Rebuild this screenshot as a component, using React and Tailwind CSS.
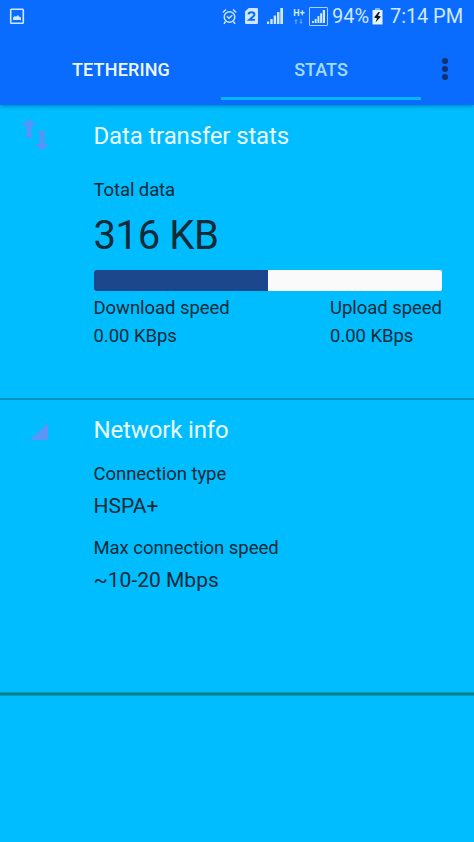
import React from 'react';

const PictureIcon = () => (
  <svg width="16" height="17" viewBox="0 0 16 17">
    <rect x="1.700" y="1.200" width="12.600" height="14" rx="0.800" fill="none" stroke="currentColor" strokeWidth="1.600" />
    <path d="M4 12V9.500l2-1.500 1 .8L9 7l1 1.500 2 1V12z" fill="currentColor" />
  </svg>
);

const AlarmIcon = () => (
  <svg width="15" height="17" viewBox="0 0 15 17" fill="none" stroke="currentColor" strokeWidth="1.400">
    <circle cx="7.500" cy="9" r="5.300" />
    <path d="M.8 4.500L4 1.500M14.200 4.500L11 1.500M3.500 13.500L2 15.800M11.500 13.500l1.500 2.300M4.800 8.300l2.200 2 3.300-3" />
  </svg>
);

const SimIcon = () => (
  <svg width="13" height="16" viewBox="0 0 12 16" preserveAspectRatio="none">
    <path d="M3.500 0H11q1 0 1 1v14q0 1-1 1H1q-1 0-1-1V3.500z" fill="currentColor" />
    <path d="M3.300 6.300Q3.500 4.300 6 4.300t2.700 2q0 1.300-1.600 2.700L4 11.900H9.200" fill="none" stroke="#0a6bff" strokeWidth="1.900" />
  </svg>
);

const SignalBars = ({ size = 16 }) => (
  <svg width={size} height={size} viewBox="0 0 16 16" fill="currentColor">
    <rect x="0" y="13.500" width="2.200" height="2.500" />
    <rect x="3.300" y="11" width="2.400" height="5" />
    <rect x="6.700" y="7.500" width="2.400" height="8.500" />
    <rect x="10" y="4" width="2.500" height="12" />
    <rect x="13.300" y="0" width="2.700" height="16" />
  </svg>
);

const DataArrows = () => (
  <svg width="9" height="5" viewBox="0 0 10 6" fill="currentColor" opacity="0.5">
    <path d="M2 0l2 2.500H2.700V6H1.300V2.500H0zM8 6L6 3.500h1.300V0h1.400v3.500H10z" />
  </svg>
);

const BatteryIcon = () => (
  <svg width="11" height="17" viewBox="0 0 11 17">
    <rect x="3" y="0" width="5" height="2" fill="#7fb5ff" />
    <rect x="0.500" y="2" width="10" height="14.500" fill="#e4f4ff" />
    <path d="M6.500 4L2 9.500l3 .8L3.500 14.500 9 8.500l-3-.8L8 4z" fill="#101820" />
  </svg>
);

const StatusBar = () => (
  <div className="flex h-8 items-center justify-between pr-[11px] pl-[9px] text-[#cfe8ff]">
    <PictureIcon />
    <div className="flex items-center">
      <AlarmIcon />
      <span className="ml-2">
        <SimIcon />
      </span>
      <span className="ml-[9px]">
        <SignalBars />
      </span>
      <div className="ml-[9px] flex w-[14px] flex-col items-center gap-[2px]">
        <span className="text-[9px] leading-[8px] font-bold">H+</span>
        <DataArrows />
      </div>
      <div className="ml-[3px] flex size-[19px] items-center justify-center rounded-[1px] border border-[#a9d2ff]">
        <SignalBars size={13} />
      </div>
      <span className="ml-[4px] text-[20px] leading-6">94%</span>
      <span className="ml-[3px]">
        <BatteryIcon />
      </span>
      <span className="ml-[7px] text-[20px] leading-6 tracking-[-0.1px]">7:14 PM</span>
    </div>
  </div>
);

const Header = () => (
  <header className="relative h-[105px] bg-[#0a6bff] shadow-[0_1px_4px_rgba(0,60,110,0.5)]">
    <StatusBar />
    <nav className="flex h-[68px] text-[18px] font-medium">
      <div className="ml-5 flex w-[202px] items-center justify-center pt-[6px] tracking-[0.15px] text-[#f0f8ff]">TETHERING</div>
      <div className="-ml-px flex w-[200px] items-center justify-center border-b-[3px] border-[#06b8fb] pt-[9px] text-[#a3dcff]">STATS</div>
      <div className="ml-[21px] flex flex-col items-center justify-center gap-[2px] pt-[5px]">
        <i className="size-[6px] rounded-full bg-[#12306b]" />
        <i className="size-[6px] rounded-full bg-[#12306b]" />
        <i className="size-[6px] rounded-full bg-[#12306b]" />
      </div>
    </nav>
  </header>
);

const Speed = ({ label, value }) => (
  <div className="text-[18.5px] leading-[27.5px] tracking-[-0.05px]">
    <div>{label}</div>
    <div>{value}</div>
  </div>
);

const TransferStats = () => (
  <section className="flex h-[295px] border-b-2 border-[#0492c0]">
    <div className="w-[93.5px] shrink-0 pt-[14px] pl-[21px]">
      <svg width="28" height="32" viewBox="0 0 28 32" fill="#5794f8">
        <path d="M8 0l7.500 6.500H10.500V19h-5V6.500H.5zM21 31.500L13.500 25h5V11h5v14h4.500z" />
      </svg>
    </div>
    <div className="w-[348.5px] pt-[15px]">
      <h2 className="text-[24px] leading-8 tracking-[-0.15px] text-[#e9faff]">Data transfer stats</h2>
      <div className="mt-[26px] text-[18.5px] leading-6 tracking-[-0.1px]">Total data</div>
      <div className="mt-[10px] text-[40px] leading-[48px] tracking-[-0.4px]">316 KB</div>
      <div className="mt-[10px] flex h-[21px] overflow-hidden rounded-[2px] bg-[#fafafa]">
        <div className="w-1/2 bg-[#1c478c]" />
      </div>
      <div className="mt-[4px] flex justify-between">
        <Speed label="Download speed" value="0.00 KBps" />
        <Speed label="Upload speed" value="0.00 KBps" />
      </div>
    </div>
  </section>
);

const NetworkInfo = () => (
  <section className="flex h-[292px]">
    <div className="w-[93.5px] shrink-0 pt-[23px] pl-[30px]">
      <svg width="18" height="17" viewBox="0 0 18 17" fill="#5b95f8">
        <path d="M18 0v17H0z" />
      </svg>
    </div>
    <div className="pt-[14px]">
      <h2 className="text-[24px] leading-8 tracking-[-0.15px] text-[#e9faff]">Network info</h2>
      <div className="mt-4 text-[18.5px] leading-6 tracking-[-0.05px]">Connection type</div>
      <div className="mt-[6px] text-[21px] leading-7">HSPA+</div>
      <div className="mt-4 text-[18.5px] leading-6 tracking-[-0.05px]">Max connection speed</div>
      <div className="mt-[6px] text-[21px] leading-7">~10-20 Mbps</div>
    </div>
  </section>
);

export default function App() {
  return (
    <div className="h-[842px] w-[474px] overflow-hidden bg-[#00bdff] font-[Roboto,sans-serif] text-[#102a36]">
      <Header />
      <TransferStats />
      <NetworkInfo />
      <div className="h-1 border-y border-[#049bb5] bg-[#087f8a]" />
    </div>
  );
}
